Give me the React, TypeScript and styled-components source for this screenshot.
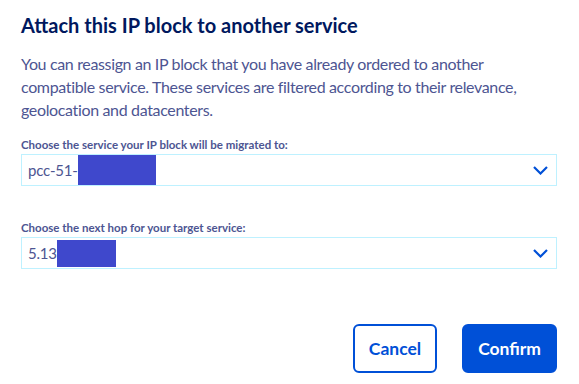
import styled, { createGlobalStyle } from 'styled-components';

const GlobalStyle = createGlobalStyle`
  body {
    margin: 0;
    background: #fff;
    font-family: Lato, "Open Sans", "Liberation Sans", sans-serif;
  }
`;

const FIELDS = [
  { label: 'Choose the service your IP block will be migrated to:', value: 'pcc-51-', mask: 78, maskHeight: 30 },
  { label: 'Choose the next hop for your target service:', value: '5.13', mask: 59, maskHeight: 27 },
];

function Chevron() {
  return (
    <svg width="15" height="9" viewBox="0 0 15 9" fill="none">
      <polyline points="1,1 7.5,7.5 14,1" stroke="#0050d7" strokeWidth="2.2" />
    </svg>
  );
}

export default function App() {
  return (
    <>
      <GlobalStyle />
      <Dialog>
        <Title>Attach this IP block to another service</Title>
        <Description>
          You can reassign an IP block that you have already ordered to another
          compatible service. These services are filtered according to their
          relevance, geolocation and datacenters.
        </Description>
        <Fields>
          {FIELDS.map((field) => (
            <Field key={field.label}>
              <Label>{field.label}</Label>
              <Select>
                <SelectValue>
                  {field.value}
                  <Mask style={{ width: field.mask, height: field.maskHeight }} />
                </SelectValue>
                <Chevron />
              </Select>
            </Field>
          ))}
        </Fields>
        <Actions>
          <Button>Cancel</Button>
          <Button $primary>Confirm</Button>
        </Actions>
      </Dialog>
    </>
  );
}

const Dialog = styled.div`
  width: 579px;
  height: 384px;
  box-sizing: border-box;
  padding: 13px 22px 0 21px;
  display: flex;
  flex-direction: column;
`;

const Title = styled.h2`
  margin: 0;
  font-size: 20px;
  line-height: 24px;
  font-weight: 700;
  color: #00185e;
`;

const Description = styled.p`
  margin: 15px 0 0;
  font-size: 16px;
  line-height: 23px;
  letter-spacing: -0.35px;
  color: #4d5592;
`;

const Fields = styled.div`
  margin-top: 16px;
  display: flex;
  flex-direction: column;
  gap: 34px;
`;

const Field = styled.div`
  display: flex;
  flex-direction: column;
`;

const Label = styled.label`
  font-size: 11.5px;
  line-height: 16px;
  font-weight: 700;
  color: #4d5592;
  margin-bottom: 1px;
`;

const Select = styled.div`
  height: 32px;
  box-sizing: border-box;
  border: 1px solid #bef1ff;
  display: flex;
  align-items: center;
  justify-content: space-between;
  padding: 0 8px 0 6px;
`;

const SelectValue = styled.div`
  display: flex;
  align-items: center;
  font-size: 15px;
  letter-spacing: -0.2px;
  color: #4d5592;
`;

const Mask = styled.span`
  display: inline-block;
  background: #3f48cc;
`;

const Actions = styled.div`
  margin-top: auto;
  margin-bottom: 11px;
  display: flex;
  justify-content: flex-end;
  gap: 25px;
`;

const Button = styled.button<{ $primary?: boolean }>`
  height: 49px;
  padding: 0 14px;
  border-radius: 6px;
  border: 2px solid #0050d7;
  background: ${(p) => (p.$primary ? '#0050d7' : '#fff')};
  color: ${(p) => (p.$primary ? '#fff' : '#0050d7')};
  font-family: inherit;
  font-size: 17.5px;
  font-weight: 700;
  cursor: pointer;
`;
